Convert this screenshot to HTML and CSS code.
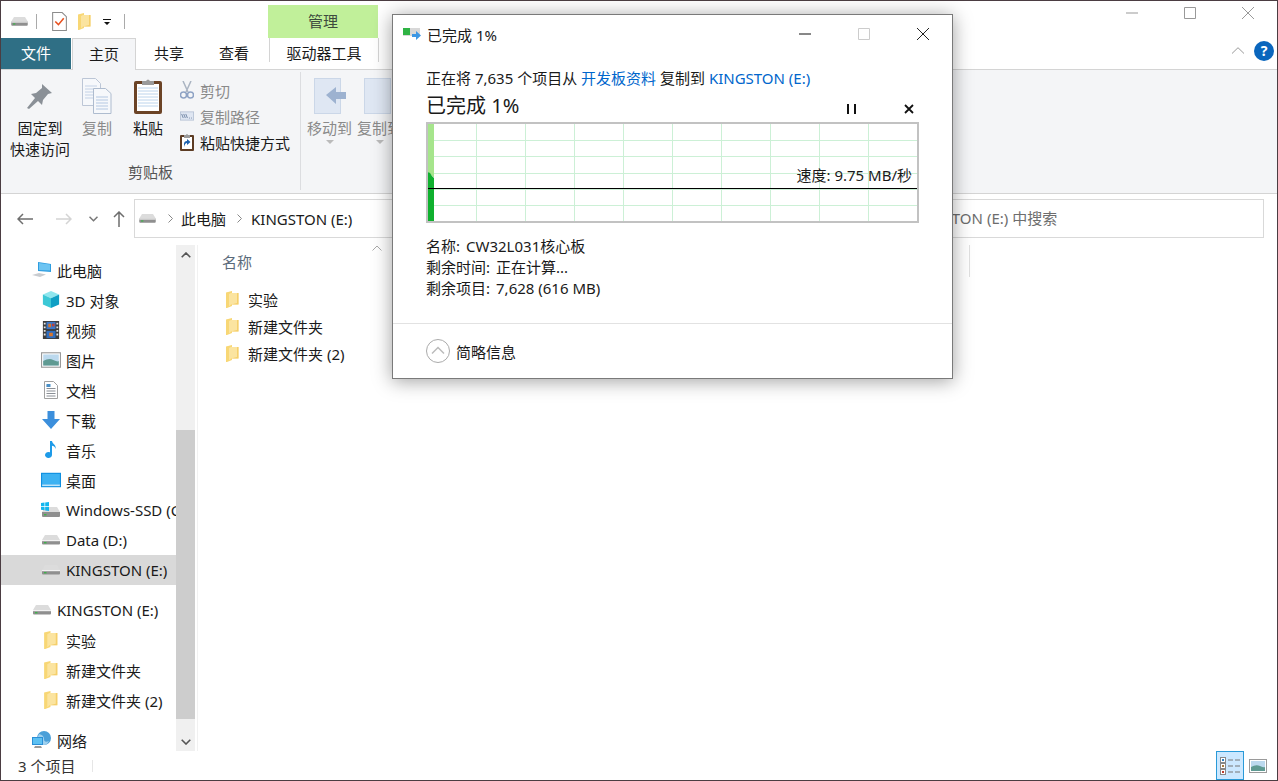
FILE: index.html
```html
<!DOCTYPE html>
<html lang="zh-CN">
<head>
<meta charset="utf-8">
<title>KINGSTON (E:)</title>
<link rel="stylesheet" href="styles.css">
</head>
<body>
<svg class="defs" width="0" height="0" aria-hidden="true">
  <defs>
    <symbol id="drive" viewBox="0 0 20 12">
      <path d="M4 1h12l3 5H1z" fill="#dcdcdc"/>
      <path d="M1 6h18v3.5q0 1-1 1H2q-1 0-1-1z" fill="#8f8f8f"/>
      <path d="M1 6h18v1.2H1z" fill="#f2f2f2"/>
      <path d="M3 8h2.5v1.4H3z" fill="#3fb14a"/>
    </symbol>
    <symbol id="folder" viewBox="0 0 13 17">
      <path d="M0 1.5 6 0v15L1 17H0z" fill="#f8d775"/>
      <path d="M5 2h7.5v11.5H5l-2 2V3z" fill="#fbe4a0"/>
      <path d="M12.5 2v11.5H5L11 12V2z" fill="#f5cf6b"/>
    </symbol>
    <symbol id="cube" viewBox="0 0 20 20">
      <path d="M10 0 19 4 10 8 1 4z" fill="#8fe6ee"/>
      <path d="M1 4l9 4v11l-9-4z" fill="#3cc8d6"/>
      <path d="M19 4l-9 4v11l9-4z" fill="#0f9fc4"/>
    </symbol>
    <symbol id="film" viewBox="0 0 18 20">
      <rect width="18" height="20" fill="#3d3d3d"/>
      <path d="M1 2h2v2H1zM1 6h2v2H1zM1 10h2v2H1zM1 14h2v2H1zM15 2h2v2h-2zM15 6h2v2h-2zM15 10h2v2h-2zM15 14h2v2h-2z" fill="#e8e8e8"/>
      <rect x="4" y="1" width="10" height="8" fill="#3c78c8"/>
      <rect x="4" y="11" width="10" height="8" fill="#2f6ec0"/>
      <path d="M6 3h3v4H6zM7 13h4v4H7z" fill="#d9762b"/>
      <path d="M10 3h3v3h-3z" fill="#b5443c"/>
    </symbol>
    <symbol id="photo" viewBox="0 0 18 14">
      <rect x=".5" y=".5" width="17" height="13" fill="#fff" stroke="#9a9a9a"/>
      <rect x="2" y="2" width="14" height="10" fill="#bcd9ee"/>
      <path d="M2 8q5-3 9-1t5 1v4H2z" fill="#5f9a92"/>
    </symbol>
    <symbol id="doc" viewBox="0 0 14 18">
      <path d="M.5.5h9l4 4v13H.5z" fill="#fff" stroke="#a0a0a0"/>
      <path d="M2.5 5h3M2.5 7.5h9M2.5 10h9M2.5 12.5h9M2.5 15h9" stroke="#8a8f96"/>
      <path d="M2.5 3h4v3h-4z" fill="#4a90c8"/>
    </symbol>
    <symbol id="down" viewBox="0 0 18 18">
      <path d="M5.5 0h7v8H18l-9 10L0 8h5.5z" fill="#3c8fdc"/>
    </symbol>
    <symbol id="note" viewBox="0 0 12 18">
      <path d="M5 0h2c.4 3 4.400 3.500 3.600 8C10 5.500 8.500 5 7 4.800V14a3.500 3 0 1 1-2-2.700z" fill="#1e9be8"/>
    </symbol>
    <symbol id="desktop" viewBox="0 0 18 13">
      <rect width="18" height="13" fill="#0f8fe0"/>
      <path d="M1 1h16v9.500H1z" fill="#3db2f2"/>
      <path d="M1 10.500h16v1.500H1z" fill="#bfe6fb"/>
    </symbol>
    <symbol id="pc" viewBox="0 0 20 16">
      <path d="M6 0l13 2v8L6 9z" fill="#2d9de0"/>
      <path d="M7 1l11 1.600v6L7 8z" fill="#6cc4f2"/>
      <path d="M0 13l7-2 7 1.500-6 2.500z" fill="#c9ccd0"/>
    </symbol>
    <symbol id="net" viewBox="0 0 20 18">
      <circle cx="12" cy="7" r="7" fill="#4a9fd8"/>
      <path d="M7 3q5 1 5 5t5 2q-2 4-5 4-6 0-7-6z" fill="#9fd0ee"/>
      <rect x="0" y="6" width="11" height="8" fill="#2b8fd6"/>
      <rect x="1" y="7" width="9" height="6" fill="#5cc0f2"/>
      <path d="M3 15h6l1 2H2z" fill="#9a9a9a"/>
    </symbol>
    <symbol id="windrive" viewBox="0 0 20 16">
      <path d="M4 5h12l3 5H1z" fill="#dcdcdc"/>
      <path d="M1 10h18v4q0 1-1 1H2q-1 0-1-1z" fill="#8f8f8f"/>
      <path d="M3 12h2.500v1.400H3z" fill="#3fb14a"/>
      <path d="M0 1l3.500-.5V4H0zM4.200.4 8 0v4H4.200zM0 4.700h3.500v3.500L0 7.800zM4.200 4.700H8V9l-3.800-.5z" fill="#13b6ee"/>
    </symbol>
  </defs>
</svg>

<div class="window">
  <header class="titlebar">
    <div class="qat">
      <svg class="ic-drive"><use href="#drive"/></svg>
      <span class="qat-sep"></span>
      <svg class="qat-check" viewBox="0 0 14 18"><path d="M.5.5h9l4 4v13H.5z" fill="#fff" stroke="#8c8c8c"/><path d="M3 9l3 3 5-6" fill="none" stroke="#e8501e" stroke-width="1.500"/></svg>
      <svg class="qat-folder"><use href="#folder"/></svg>
      <svg class="qat-caret" viewBox="0 0 8 6"><path d="M0 0h8v1H0zM1 3h6L4 6z" fill="#111"/></svg>
      <span class="qat-sep qat-sep-end"></span>
    </div>
    <div class="manage-tab">管理</div>
    <div class="win-title">KINGSTON (E:)</div>
    <div class="win-controls">
      <svg viewBox="0 0 12 12"><path d="M0 6h12" stroke="#999" fill="none"/></svg>
      <svg viewBox="0 0 12 12"><path d="M.5.5h11v11H.5z" stroke="#999" fill="none"/></svg>
      <svg viewBox="0 0 12 12"><path d="M0 0l12 12M12 0 0 12" stroke="#999" fill="none"/></svg>
    </div>
  </header>

  <nav class="tabs">
    <div class="tab tab-file">文件</div>
    <div class="tab tab-active">主页</div>
    <div class="tab tab-share">共享</div>
    <div class="tab tab-view">查看</div>
    <div class="tab tab-drive">驱动器工具</div>
    <div class="tabs-right">
      <svg class="collapse" viewBox="0 0 12 7"><path d="M0 6.500 6 .7l6 5.800" fill="none" stroke="#999"/></svg>
      <div class="help">?</div>
    </div>
  </nav>

  <section class="ribbon">
    <div class="group group-clip">
      <div class="group-body">
        <div class="big big-pin">
          <svg class="ic-pin" viewBox="0 0 26 26"><path d="M15 1l10 9-4 1-5 6-1 5-4-4-9 8-2-1 8-10-4-4 5-1 6-5z" fill="#8a9097"/></svg>
          <span class="big-label">固定到<br>快速访问</span>
        </div>
        <div class="big big-copy muted">
          <svg class="ic-big" viewBox="0 0 30 36"><path d="M.5.500h13l5 5v22H.5z" fill="#f6f8fb" stroke="#bcc6d6"/><path d="M3 8h12M3 11h12M3 14h12M3 17h12M3 20h12" stroke="#c4d2e6"/><path d="M11.500 10.500h12l5.500 5v20H11.500z" fill="#f6f8fb" stroke="#aebccf"/><path d="M14 19h12M14 22h12M14 25h12M14 28h12M14 31h12" stroke="#b4c8e2"/></svg>
          <span class="big-label">复制</span>
        </div>
        <div class="big big-paste">
          <svg class="ic-big ic-paste" viewBox="0 0 28 36"><rect x="0" y="3" width="28" height="33" rx="2" fill="#6b4326"/><rect x="3" y="6" width="22" height="27" fill="#fff"/><path d="M4 10h20M4 13h20M4 16h20M4 19h20M4 22h20M4 25h20M4 28h20" stroke="#bcd4ec"/><path d="M8 3h4q2-3 4 0h4v4H8z" fill="#9a9a9a"/></svg>
          <span class="big-label">粘贴</span>
        </div>
        <div class="small-col">
          <div class="small muted">
            <svg class="ic-small" viewBox="0 0 14 18"><path d="M3 0l5 11M11 0 6 11" stroke="#aab4c2" stroke-width="1.500" fill="none"/><circle cx="3.500" cy="14" r="3" fill="none" stroke="#8ea2c4" stroke-width="1.500"/><circle cx="10.500" cy="14" r="3" fill="none" stroke="#8ea2c4" stroke-width="1.500"/></svg>
            <span>剪切</span>
          </div>
          <div class="small muted">
            <svg class="ic-small" viewBox="0 0 17 11"><rect x=".5" y=".5" width="16" height="10" fill="#dfe6f2" stroke="#b4c0d4"/><path d="M2 3l2 5M4.500 3l2 5M7 3l2 5" stroke="#5f7699" fill="none"/><path d="M11 8h1M13.500 8h1" stroke="#5f7699"/></svg>
            <span>复制路径</span>
          </div>
          <div class="small">
            <svg class="ic-small" viewBox="0 0 14 18"><rect y="2" width="14" height="16" rx="1" fill="#5d3c24"/><rect x="2" y="4" width="10" height="12" fill="#fff"/><path d="M4 2h2q1-2 2 0h2v3H4z" fill="#9a9a9a"/><path d="M4 14v-3q0-3 3-3V6l3.500 3L7 12v-2q-2 0-3 4z" fill="#1c62b0"/></svg>
            <span>粘贴快捷方式</span>
          </div>
        </div>
      </div>
      <div class="group-name">剪贴板</div>
    </div>
    <div class="group group-org">
      <div class="group-body">
        <div class="big big-move muted">
          <svg class="ic-big ic-move" viewBox="0 0 32 36"><rect x=".5" y=".5" width="26" height="35" fill="#dfe7f3" stroke="#cbd7e8"/><path d="M12 17 22 9v5h10v7H22v5z" fill="#9db2d0"/></svg>
          <span class="big-label">移动到</span>
          <svg class="drop" viewBox="0 0 8 4"><path d="M0 0h8L4 4z" fill="#bbb"/></svg>
        </div>
        <div class="big big-copyto muted">
          <svg class="ic-big ic-move" viewBox="0 0 32 36"><rect x=".5" y=".5" width="26" height="35" fill="#dfe7f3" stroke="#cbd7e8"/></svg>
          <span class="big-label">复制到</span>
          <svg class="drop" viewBox="0 0 8 4"><path d="M0 0h8L4 4z" fill="#bbb"/></svg>
        </div>
      </div>
    </div>
  </section>

  <div class="addressbar">
    <svg class="nav nav-back" viewBox="0 0 16 12"><path d="M16 6H1M6 1 1 6l5 5" fill="none" stroke="#6e6e6e" stroke-width="1.500"/></svg>
    <svg class="nav nav-fwd" viewBox="0 0 16 12"><path d="M0 6h15M10 1l5 5-5 5" fill="none" stroke="#d4d4d4" stroke-width="1.500"/></svg>
    <svg class="nav nav-drop" viewBox="0 0 9 6"><path d="M.5.800 4.500 4.800 8.500.8" fill="none" stroke="#777" stroke-width="1.500"/></svg>
    <svg class="nav nav-up" viewBox="0 0 12 16"><path d="M6 16V1M1 6l5-5 5 5" fill="none" stroke="#6e6e6e" stroke-width="1.500"/></svg>
    <div class="address">
      <svg class="ic-drive"><use href="#drive"/></svg>
      <svg class="crumb-sep" viewBox="0 0 5 9"><path d="M.5.500l4 4-4 4" fill="none" stroke="#888"/></svg>
      <span class="crumb">此电脑</span>
      <svg class="crumb-sep" viewBox="0 0 5 9"><path d="M.5.500l4 4-4 4" fill="none" stroke="#888"/></svg>
      <span class="crumb">KINGSTON (E:)</span>
    </div>
    <div class="search">在 KINGSTON (E:) 中搜索</div>
  </div>

  <main class="main">
    <aside class="nav-pane">
      <ul class="tree">
        <li class="row lvl1"><svg class="ti"><use href="#pc"/></svg>此电脑</li>
        <li class="row lvl2"><svg class="ti"><use href="#cube"/></svg>3D 对象</li>
        <li class="row lvl2"><svg class="ti"><use href="#film"/></svg>视频</li>
        <li class="row lvl2"><svg class="ti"><use href="#photo"/></svg>图片</li>
        <li class="row lvl2"><svg class="ti"><use href="#doc"/></svg>文档</li>
        <li class="row lvl2"><svg class="ti"><use href="#down"/></svg>下载</li>
        <li class="row lvl2"><svg class="ti"><use href="#note"/></svg>音乐</li>
        <li class="row lvl2"><svg class="ti"><use href="#desktop"/></svg>桌面</li>
        <li class="row lvl2"><svg class="ti"><use href="#windrive"/></svg>Windows-SSD (C:)</li>
        <li class="row lvl2"><svg class="ti"><use href="#drive"/></svg>Data (D:)</li>
        <li class="row lvl2 selected"><svg class="ti"><use href="#drive"/></svg>KINGSTON (E:)</li>
      </ul>
      <ul class="tree tree-next">
        <li class="row lvl1"><svg class="ti"><use href="#drive"/></svg>KINGSTON (E:)</li>
        <li class="row lvl2"><svg class="ti"><use href="#folder"/></svg>实验</li>
        <li class="row lvl2"><svg class="ti"><use href="#folder"/></svg>新建文件夹</li>
        <li class="row lvl2"><svg class="ti"><use href="#folder"/></svg>新建文件夹 (2)</li>
      </ul>
      <ul class="tree tree-next">
        <li class="row lvl1"><svg class="ti"><use href="#net"/></svg>网络</li>
      </ul>
    </aside>
    <div class="scrollbar">
      <div class="sb-btn"><svg viewBox="0 0 10 6"><path d="M.7 5.300 5 1l4.300 4.300" fill="none" stroke="#555" stroke-width="1.600"/></svg></div>
      <div class="sb-track"><div class="sb-thumb"></div></div>
      <div class="sb-btn"><svg viewBox="0 0 10 6"><path d="M.7.700 5 5 9.300.7" fill="none" stroke="#555" stroke-width="1.600"/></svg></div>
    </div>
    <div class="files">
      <div class="col-head">
        <span class="col-name">名称</span>
        <svg class="sort" viewBox="0 0 10 6"><path d="M.5 5.500 5 1l4.500 4.500" fill="none" stroke="#aaa"/></svg>
        <span class="col-sep"></span>
      </div>
      <ul class="file-list">
        <li class="file"><svg class="fi"><use href="#folder"/></svg>实验</li>
        <li class="file"><svg class="fi"><use href="#folder"/></svg>新建文件夹</li>
        <li class="file"><svg class="fi"><use href="#folder"/></svg>新建文件夹 (2)</li>
      </ul>
    </div>
  </main>

  <footer class="status">
    <span class="count">3 个项目</span>
    <span class="status-sep"></span>
    <div class="views">
      <div class="view view-on">
        <svg viewBox="0 0 20 18"><rect x=".5" y=".5" width="5" height="5" fill="#fff" stroke="#888"/><rect x="2" y="2" width="2" height="2" fill="#2d7fc0"/><rect x=".5" y="6.500" width="5" height="5" fill="#fff" stroke="#888"/><rect x="2" y="8" width="2" height="2" fill="#a87a3c"/><rect x=".5" y="12.500" width="5" height="5" fill="#fff" stroke="#888"/><rect x="2" y="14" width="2" height="2" fill="#c0392b"/><path d="M8 3h5M15 3h5M8 9h5M15 9h5M8 15h5M15 15h5" stroke="#777"/></svg>
      </div>
      <div class="view">
        <svg viewBox="0 0 18 14"><use href="#photo"/></svg>
      </div>
    </div>
  </footer>
</div>

<section class="dialog">
  <div class="dlg-title">
    <svg class="dlg-icon" viewBox="0 0 18 13"><rect x="0" y="0" width="17" height="8" fill="#d8d8d8"/><rect x="0" y="0" width="7" height="7" fill="#2fb344"/><path d="M9 6h4V3l5 4.500-5 4.500V9H9z" fill="#3d97e4"/></svg>
    <span class="dlg-caption">已完成 1%</span>
    <div class="dlg-controls">
      <svg viewBox="0 0 12 12"><path d="M0 6h12" stroke="#111" fill="none"/></svg>
      <svg viewBox="0 0 12 12"><path d="M.5.500h11v11H.5z" stroke="#ccc" fill="none"/></svg>
      <svg viewBox="0 0 12 12"><path d="M0 0l12 12M12 0 0 12" stroke="#222" fill="none"/></svg>
    </div>
  </div>
  <div class="dlg-body">
    <p class="dlg-line">正在将 7,635 个项目从 <a class="link">开发板资料</a> 复制到 <a class="link">KINGSTON (E:)</a></p>
    <div class="dlg-head">
      <h1 class="dlg-pct">已完成 1%</h1>
      <svg class="dlg-pause" viewBox="0 0 9 10"><path d="M0 0h2v10H0zM7 0h2v10H7z" fill="#111"/></svg>
      <svg class="dlg-stop" viewBox="0 0 10 10"><path d="M1 1l8 8M9 1 1 9" stroke="#111" stroke-width="1.800" fill="none"/></svg>
    </div>
    <div class="graph">
      <svg class="graph-svg" viewBox="0 0 489 97" shape-rendering="crispEdges">
        <path d="M48.500 0v97M97.500 0v97M146.500 0v97M195.500 0v97M244.500 0v97M293.500 0v97M342.500 0v97M391.500 0v97M440.500 0v97M0 16.500h489M0 32.500h489M0 49.500h489M0 65.500h489M0 81.500h489" stroke="#ccf0d6" fill="none"/>
        <path d="M0 0h6v54L0 48z" fill="#a6e58c"/>
        <path d="M0 48 2 49 4 52 6 54V97H0z" fill="#0fb02e" shape-rendering="auto"/>
        <path d="M0 64.500h489" stroke="#000" fill="none"/>
      </svg>
      <span class="speed">速度: 9.75 MB/秒</span>
    </div>
    <dl class="dlg-details">
      <div><dt>名称:</dt><dd>CW32L031核心板</dd></div>
      <div><dt>剩余时间:</dt><dd>正在计算...</dd></div>
      <div><dt>剩余项目:</dt><dd>7,628 (616 MB)</dd></div>
    </dl>
  </div>
  <div class="dlg-foot">
    <svg class="dlg-toggle" viewBox="0 0 24 24"><circle cx="12" cy="12" r="11.500" fill="#fff" stroke="#aaa"/><path d="M6 14.500l6-6 6 6" fill="none" stroke="#bbb" stroke-width="1.500"/></svg>
    <span>简略信息</span>
  </div>
</section>
</body>
</html>
```
FILE: styles.css
```css
* { box-sizing: border-box; }
html, body { height: 100%; }
body {
  margin: 0;
  padding: 1px;
  width: 1278px;
  height: 781px;
  overflow: hidden;
  position: relative;
  background: #4b3d42;
  font-family: "Noto Sans", "Noto Sans CJK SC", sans-serif;
  font-size: 15px;
  color: #1a1a1a;
}
ul, dl, dd, p, h1 { margin: 0; padding: 0; list-style: none; }
svg { display: block; flex: none; }
.defs { position: absolute; }

.window {
  width: 1276px;
  height: 779px;
  background: #fff;
  display: flex;
  flex-direction: column;
  overflow: hidden;
}

/* title bar */
.titlebar { height: 37px; display: flex; flex: none; position: relative; }
.qat { display: flex; align-items: center; width: 267px; height: 37px; padding: 4px 0 0 9px; }
.ic-drive { width: 19px; height: 11px; }
.qat-sep { width: 1px; height: 15px; background: #aaa; margin-left: 7px; }
.qat-check { width: 15px; height: 19px; margin-left: 15px; }
.qat-folder { width: 13px; height: 17px; margin-left: 11px; }
.qat-caret { width: 8px; height: 6px; margin-left: 12px; }
.qat-sep-end { margin-left: 13px; }
.manage-tab {
  width: 110px;
  height: 33px;
  margin-top: 4px;
  background: #c1f09a;
  color: #3e4a3e;
  text-align: center;
  line-height: 33px;
}
.win-title { margin: 4px 0 0 16px; line-height: 26px; color: #444; }
.win-controls { margin-left: auto; display: flex; align-items: center; gap: 46px; padding: 0 23px 13px 0; }
.win-controls svg { width: 12px; height: 12px; }

/* tabs */
.tabs { height: 32px; display: flex; flex: none; border-bottom: 1px solid #d4d4d4; }
.tab { height: 31px; line-height: 30px; text-align: center; }
.tab-file { width: 70px; background: #2f6f85; color: #fff; }
.tab-active {
  width: 64px;
  height: 32px;
  margin-left: 1px;
  background: #f4f5f7;
  border: 1px solid #d4d4d4;
  border-bottom: 0;
}
.tab-share { width: 66px; }
.tab-view { width: 64px; margin-left: 0; }
.tab-drive { width: 110px; margin-left: 3px; border: 1px solid #d4d4d4; border-width: 0 1px; height: 24px; }
.tabs-right { margin-left: auto; display: flex; align-items: center; padding: 0 3px 6px 0; gap: 10px; }
.collapse { width: 12px; height: 7px; }
.help {
  width: 20px;
  height: 20px;
  border-radius: 50%;
  background: #0a66bd;
  color: #fff;
  font-weight: 700;
  font-size: 14px;
  line-height: 20px;
  text-align: center;
}

/* ribbon */
.ribbon {
  height: 124px;
  flex: none;
  display: flex;
  background: #f4f5f7;
  border-bottom: 1px solid #d4d4d4;
  padding-top: 2px;
}
.group { display: flex; flex-direction: column; }
.group-clip { width: 300px; height: 118px; border-right: 1px solid #dcdde0; }
.group-body { display: flex; flex: 1; align-items: flex-start; }
.group-name { text-align: center; color: #555; line-height: 20px; height: 28px; }
.big { display: flex; flex-direction: column; align-items: center; text-align: center; }
.big-label { line-height: 21px; }
.big-pin { width: 60px; margin-left: 9px; padding-top: 11px; }
.ic-pin { width: 26px; height: 26px; margin-bottom: 9px; }
.big-copy { width: 30px; margin-left: 12px; padding-top: 6px; }
.ic-big { width: 30px; height: 36px; margin-bottom: 4px; }
.big-paste { width: 30px; margin-left: 21px; padding-top: 6px; }
.ic-paste { width: 28px; }
.small-col { display: flex; flex-direction: column; margin-left: 17px; padding-top: 5px; }
.small { height: 26px; display: flex; align-items: center; gap: 6px; }
.ic-small { width: 14px; height: 18px; }
.muted { color: #8a8a8a; }
.group-org { flex: 1; padding-left: 6px; }
.big-move { width: 45px; padding-top: 6px; }
.ic-move { width: 32px; }
.big-copyto { width: 45px; margin-left: 5px; padding-top: 6px; }
.drop { width: 8px; height: 4px; margin-top: 1px; }

/* address bar */
.addressbar { height: 49px; flex: none; display: flex; padding-top: 5px; position: relative; }
.nav { margin-top: 14px; }
.nav-back { width: 16px; height: 12px; margin-left: 16px; }
.nav-fwd { width: 16px; height: 12px; margin-left: 23px; }
.nav-drop { width: 9px; height: 6px; margin: 17px 0 0 17px; }
.nav-up { width: 12px; height: 16px; margin: 12px 0 0 15px; }
.address {
  width: 745px;
  height: 39px;
  margin-left: 9px;
  border: 1px solid #d9d9d9;
  display: flex;
  align-items: center;
  padding-left: 3px;
}
.crumb-sep { width: 5px; height: 9px; margin-left: 11px; }
.crumb { margin-left: 8px; }
.crumb:last-child { margin-left: 9px; }
.search {
  width: 385px;
  height: 39px;
  border: 1px solid #d9d9d9;
  line-height: 37px;
  padding-left: 8px;
  color: #6d6d6d;
}

/* main */
.main { height: 508px; flex: none; display: flex; }
.nav-pane { width: 175px; padding-top: 12px; overflow: hidden; }
.row {
  height: 30px;
  display: flex;
  align-items: center;
  white-space: nowrap;
  overflow: hidden;
}
.lvl1 { padding-left: 31px; }
.lvl2 { padding-left: 40px; }
.ti { width: 20px; height: 18px; margin-right: 5px; }
.selected { background: #d9d9d9; }
.tree-next { margin-top: 10px; }
.scrollbar {
  width: 19px;
  height: 506px;
  margin-top: 2px;
  background: #f0f0f0;
  display: flex;
  flex-direction: column;
}
.sb-btn { height: 19px; flex: none; display: flex; align-items: center; justify-content: center; }
.sb-btn svg { width: 10px; height: 6px; }
.sb-track { flex: 1; padding-top: 166px; padding-bottom: 13px; }
.sb-thumb { height: 100%; background: #cdcdcd; }
.files { flex: 1; border-left: 1px solid #f1f1f1; margin: 2px 0 0 2px; padding-left: 24px; position: relative; }
.col-head { height: 33px; display: flex; align-items: center; }
.col-name { color: #5a6a7a; }
.sort { width: 10px; height: 6px; position: absolute; left: 174px; top: 0; }
.col-sep { position: absolute; left: 771px; top: 0; width: 1px; height: 32px; background: #e0e0e0; }
.file-list { padding-top: 8px; }
.file { height: 27px; display: flex; align-items: center; padding-left: 4px; }
.fi { width: 13px; height: 17px; margin-right: 9px; }

/* status bar */
.status { height: 29px; flex: none; display: flex; align-items: center; padding-left: 17px; }
.count { color: #333; }
.status-sep { width: 1px; height: 12px; margin-left: 17px; background: #e6e6e6; }
.views { margin-left: auto; display: flex; align-items: center; padding-right: 10px; }
.view { width: 18px; height: 14px; margin-left: 5px; }
.view-on {
  width: 28px;
  height: 29px;
  background: #cce8ff;
  border: 1px solid #2a9ad8;
  margin-left: 0;
  padding: 5px 3px;
}

/* progress dialog: a window floating over the explorer */
.dialog {
  position: absolute;
  left: 392px;
  top: 14px;
  width: 561px;
  height: 365px;
  background: #fff;
  border: 1px solid #7a7a7a;
  box-shadow: 0 2px 18px rgba(0, 0, 0, .38);
  display: flex;
  flex-direction: column;
}
.dlg-title { height: 38px; display: flex; align-items: center; padding-left: 10px; flex: none; }
.dlg-icon { width: 18px; height: 13px; }
.dlg-caption { margin-left: 6px; }
.dlg-controls { margin-left: auto; display: flex; gap: 47px; padding-right: 23px; }
.dlg-controls svg { width: 12px; height: 12px; }
.dlg-body { padding: 14px 33px 0; flex: 1; }
.dlg-line { line-height: 23px; white-space: nowrap; }
.link { color: #0066cc; }
.dlg-head { height: 32px; display: flex; align-items: center; position: relative; }
.dlg-pct { font-size: 20px; font-weight: 400; line-height: 30px; }
.dlg-pause { width: 9px; height: 10px; margin-left: auto; margin-right: 48px; margin-top: 5px; }
.dlg-stop { width: 10px; height: 10px; margin-right: 5px; margin-top: 5px; }
.graph {
  width: 493px;
  height: 101px;
  border: 2px solid #c2c2c2;
  position: relative;
}
.graph-svg { width: 489px; height: 97px; }
.speed { position: absolute; right: 5px; top: 41px; line-height: 20px; white-space: nowrap; }
.dlg-details { margin-top: 13px; line-height: 21px; }
.dlg-details div { display: flex; gap: 6px; }
.dlg-foot {
  height: 55px;
  flex: none;
  border-top: 1px solid #e2e2e2;
  display: flex;
  align-items: center;
  padding-left: 33px;
  gap: 6px;
}
.dlg-toggle { width: 24px; height: 24px; }
```
